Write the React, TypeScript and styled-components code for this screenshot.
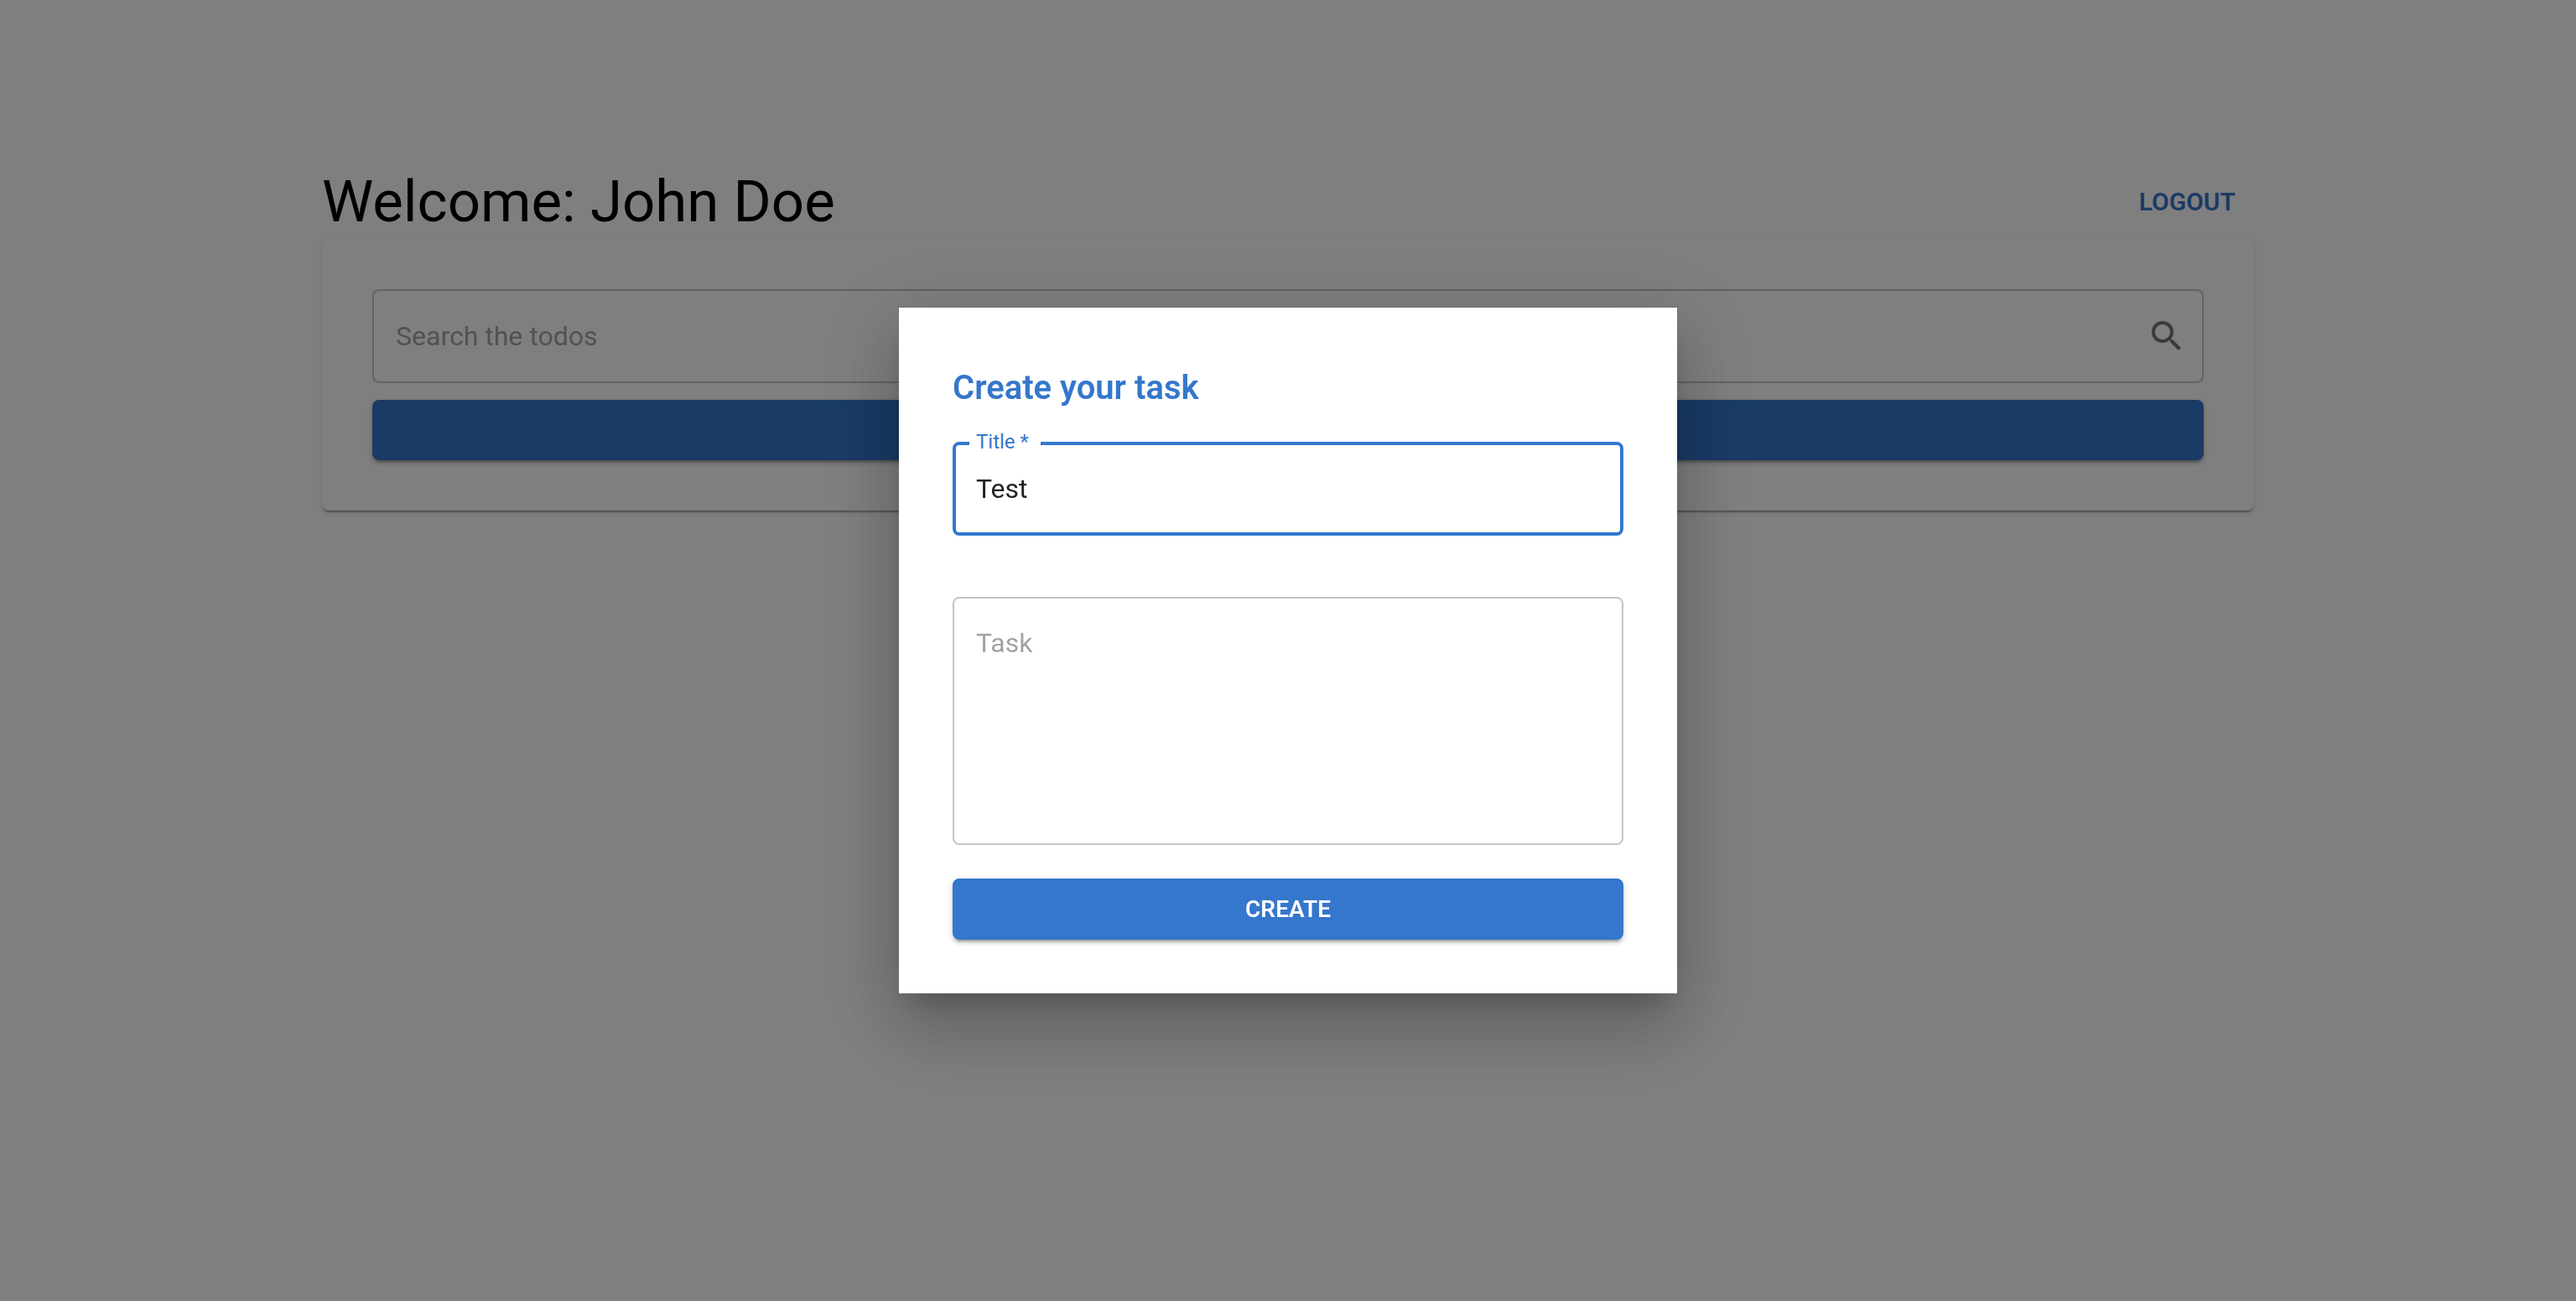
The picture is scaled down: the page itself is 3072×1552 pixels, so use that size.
import React from "react";
import styled, { createGlobalStyle, css } from "styled-components";
import { MdSearch } from "react-icons/md";

const blue = "#3477cc";
const outline = "rgba(0, 0, 0, 0.23)";
const textColor = "rgba(0, 0, 0, 0.87)";

const GlobalStyle = createGlobalStyle`
  *, *::before, *::after { box-sizing: border-box; }
  body {
    margin: 0;
    background: #fff;
    color: ${textColor};
    font-family: Roboto, "Liberation Sans", sans-serif;
    font-size: 32px;
  }
  input, textarea, button { font-family: inherit; }
`;

const Container = styled.main`
  width: 100%;
  max-width: 2400px;
  margin: 0 auto;
  padding: 200px 48px 48px;
`;

const Header = styled.header`
  display: flex;
  align-items: flex-start;
  justify-content: space-between;
  min-height: 85px;
`;

const Greeting = styled.h1`
  margin: 0;
  color: #000;
  font-size: 69px;
  font-weight: 400;
  line-height: 82px;
`;

const LogoutButton = styled.button`
  padding: 16px 22px;
  border: 0;
  border-radius: 8px;
  background: none;
  color: ${blue};
  font-size: 30px;
  font-weight: 600;
  line-height: 50px;
  text-transform: uppercase;
  cursor: pointer;
`;

const Card = styled.section`
  display: flex;
  flex-direction: column;
  gap: 20px;
  padding: 60px;
  border-radius: 8px;
  background: #fff;
  box-shadow: 0 4px 2px -2px rgba(0, 0, 0, 0.2), 0 2px 2px rgba(0, 0, 0, 0.14),
    0 2px 6px rgba(0, 0, 0, 0.12);
`;

const SearchBox = styled.div`
  display: flex;
  align-items: center;
  height: 112px;
  padding: 0 18px 0 26px;
  border: 2px solid ${outline};
  border-radius: 8px;
`;

const placeholder = css`
  &::placeholder {
    color: ${textColor};
    opacity: 0.42;
  }
`;

const SearchInput = styled.input`
  flex: 1;
  min-width: 0;
  padding: 0;
  border: 0;
  outline: 0;
  background: none;
  color: inherit;
  font-size: 32px;
  line-height: 46px;
  ${placeholder}
`;

const IconButton = styled.button`
  display: flex;
  padding: 0;
  border: 0;
  background: none;
  color: rgba(0, 0, 0, 0.54);
  font-size: 48px;
  cursor: pointer;
`;

const PrimaryButton = styled.button`
  width: 100%;
  min-height: 72px;
  padding: 12px 32px;
  border: 0;
  border-radius: 8px;
  background: ${blue};
  color: #fff;
  font-size: 28px;
  font-weight: 600;
  line-height: 49px;
  text-transform: uppercase;
  box-shadow: 0 6px 2px -4px rgba(0, 0, 0, 0.2), 0 4px 4px rgba(0, 0, 0, 0.14),
    0 2px 10px rgba(0, 0, 0, 0.12);
  cursor: pointer;
`;

const Backdrop = styled.div`
  position: fixed;
  inset: 0;
  display: flex;
  align-items: center;
  justify-content: center;
  background: rgba(0, 0, 0, 0.5);
`;

const Dialog = styled.form`
  width: 100%;
  max-width: 928px;
  padding: 64px;
  background: #fff;
  box-shadow: 0 22px 30px -14px rgba(0, 0, 0, 0.2),
    0 48px 76px 6px rgba(0, 0, 0, 0.14), 0 18px 92px 16px rgba(0, 0, 0, 0.12);
`;

const DialogTitle = styled.h2`
  margin: 0 0 32px;
  color: ${blue};
  font-size: 40px;
  font-weight: 600;
  line-height: 64px;
`;

const Field = styled.div`
  position: relative;
  display: flex;
  margin-bottom: 73px;
`;

const FieldLabel = styled.label`
  position: absolute;
  top: -14px;
  left: 20px;
  padding: 0 14px 0 8px;
  background: #fff;
  color: ${blue};
  font-size: 24px;
  line-height: 28px;
`;

const TitleInput = styled.input`
  width: 100%;
  height: 112px;
  padding: 0 24px;
  border: 4px solid ${blue};
  border-radius: 8px;
  outline: 0;
  background: none;
  color: inherit;
  font-size: 32px;
`;

const TaskInput = styled.textarea`
  display: block;
  width: 100%;
  height: 296px;
  margin-bottom: 40px;
  padding: 30px 26px;
  border: 2px solid ${outline};
  border-radius: 8px;
  outline: 0;
  background: none;
  color: inherit;
  font-size: 32px;
  line-height: 46px;
  resize: none;
  ${placeholder}
`;

export default function App() {
  return (
    <>
      <GlobalStyle />
      <Container>
        <Header>
          <Greeting>Welcome: John Doe</Greeting>
          <LogoutButton type="button">Logout</LogoutButton>
        </Header>
        <Card>
          <SearchBox>
            <SearchInput type="text" placeholder="Search the todos" aria-label="Search the todos" />
            <IconButton type="button" aria-label="Search">
              <MdSearch />
            </IconButton>
          </SearchBox>
          <PrimaryButton type="button" aria-label="Create a task" />
        </Card>
      </Container>
      <Backdrop>
        <Dialog
          role="dialog"
          aria-modal="true"
          aria-labelledby="dialog-title"
          onSubmit={(event: React.FormEvent) => event.preventDefault()}
        >
          <DialogTitle id="dialog-title">Create your task</DialogTitle>
          <Field>
            <TitleInput id="title" type="text" defaultValue="Test" required />
            <FieldLabel htmlFor="title">Title *</FieldLabel>
          </Field>
          <TaskInput placeholder="Task" aria-label="Task" />
          <PrimaryButton type="submit">Create</PrimaryButton>
        </Dialog>
      </Backdrop>
    </>
  );
}
